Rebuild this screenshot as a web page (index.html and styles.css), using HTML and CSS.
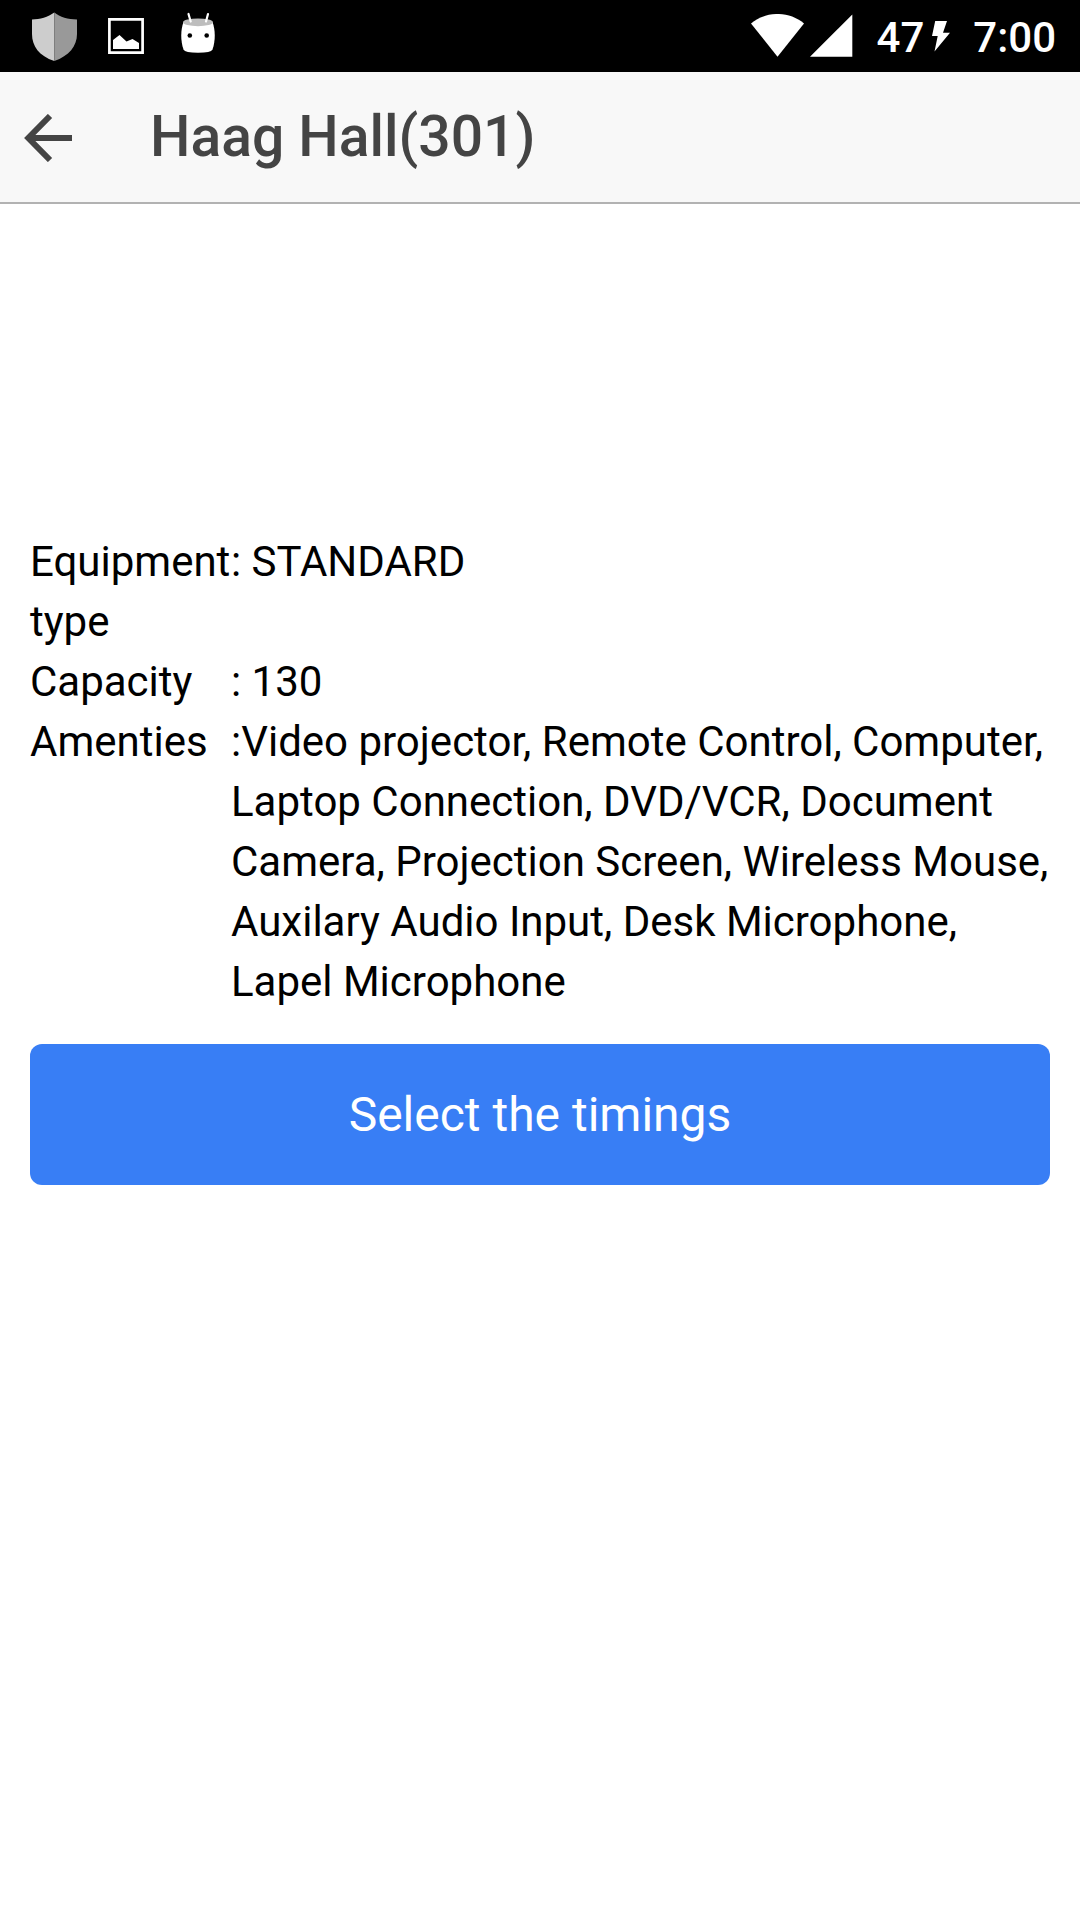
FILE: index.html
```html
<!DOCTYPE html>
<html lang="en">
<head>
<meta charset="utf-8">
<title>Haag Hall(301)</title>
<link rel="stylesheet" href="styles.css">
</head>
<body>
<div class="status-bar">
  <div class="notifications">
    <svg class="shield" width="46" height="50" viewBox="0 0 46 50">
      <path fill="#cdcdcd" d="M23.300 .5C17 5 9 7.400 1 7.500V22C1 34 8 44 23.300 49z"/>
      <path fill="#999" d="M23.300 .5C29 5 37 7.400 46 7.500V22C46 34 38 44 23.300 49z"/>
    </svg>
    <svg class="picture" width="36" height="36" viewBox="0 0 36 36">
      <path fill="none" stroke="#fff" stroke-width="2.700" d="M1.400 1.400h33.200v33.200H1.400z"/>
      <path fill="#fff" d="M5 31V22l6.500-5 7 6.500L24.500 21 31 25v6z"/>
    </svg>
    <svg class="droid" width="36" height="42" viewBox="0 0 36 42">
      <path fill="#fff" d="M3.500 10C12 7 24 7 32.500 10C35.500 18 35.500 29 32.500 37.500Q31 40.700 18 40.700T3.500 37.500C.5 29 .5 18 3.500 10z"/>
      <ellipse cx="18" cy="10.300" rx="15" ry="3.900" fill="#bdbdbd"/>
      <path fill="none" stroke="#fff" stroke-width="2.200" stroke-linecap="round" d="M8.500 2l2.200 7.500M28 2L26 9.500"/>
      <circle cx="9.800" cy="23.500" r="2.300"/><circle cx="26.700" cy="23.500" r="2.300"/>
    </svg>
  </div>
  <div class="system">
    <svg class="wifi" width="53" height="43" viewBox="0 0 53 43"><path fill="#fff" d="M0 9.500C15-3.200 38-3.200 53 9.500L26.500 42.700z"/></svg>
    <svg class="signal" width="43" height="43" viewBox="0 0 43 43"><path fill="#fff" d="M0 42.700L42.300.5v42.200z"/></svg>
    <span class="battery">47</span>
    <svg class="bolt" width="18" height="31" viewBox="0 0 18 31"><path fill="#fff" d="M3.200 0h11.800l-4 11.700h7L2.500 30.500l3.200-15.500H0z"/></svg>
    <span class="clock">7:00</span>
  </div>
</div>
<header class="header">
  <svg class="back" width="49" height="48" viewBox="0 0 49 48"><path fill="none" stroke="#444" stroke-width="6" d="M26 2L4.300 24l21.700 22M4.300 24H48"/></svg>
  <h1 class="title">Haag Hall(301)</h1>
</header>
<main class="content">
  <dl class="details">
    <dt>Equipment type</dt><dd>: STANDARD</dd>
    <dt>Capacity</dt><dd>: 130</dd>
    <dt>Amenties</dt><dd>:Video projector, Remote Control, Computer, Laptop Connection, DVD/VCR, Document Camera, Projection Screen, Wireless Mouse, Auxilary Audio Input, Desk Microphone, Lapel Microphone</dd>
  </dl>
  <button class="select">Select the timings</button>
</main>
</body>
</html>
```
FILE: styles.css
```css
* { box-sizing: border-box; }
body {
  margin: 0;
  min-height: 1920px;
  background: #fff;
  color: #000;
  font-family: Roboto, sans-serif;
}
svg { display: block; flex: none; }
.status-bar {
  display: flex;
  justify-content: space-between;
  height: 72px;
  padding: 0 24px 0 31px;
  background: #000;
  color: #fff;
  font-size: 42px;
  font-weight: 500;
  line-height: 50px;
}
.notifications, .system { display: flex; align-items: flex-start; }
.shield { margin-top: 12px; }
.picture { margin: 18px 0 0 31px; }
.droid { margin: 12px 0 0 36px; }
.wifi { margin-top: 14px; }
.signal { margin: 14px 0 0 6px; }
.battery { margin: 13px 0 0 24px; }
.bolt { margin: 21px 0 0 8px; }
.clock { margin: 13px 0 0 23px; }
.header {
  display: flex;
  align-items: flex-start;
  height: 132px;
  padding-left: 24px;
  background: #f8f8f8;
  border-bottom: 2px solid #b2b2b2;
  color: #444;
}
.back { margin-top: 42px; }
.title {
  margin: 0 0 0 77px;
  font-size: 57px;
  font-weight: 500;
  line-height: 129px;
}
.content { padding: 328px 30px 0; }
.details {
  display: grid;
  grid-template-columns: 201px 1fr;
  margin: 0;
  font-size: 42px;
  line-height: 60px;
}
.details dt, .details dd { margin: 0; }
.select {
  display: block;
  width: 100%;
  height: 141px;
  margin-top: 32px;
  padding: 0;
  border: 0;
  border-radius: 12px;
  background: #387ef5;
  color: #fff;
  font: 400 48px/141px Roboto, sans-serif;
}
```
